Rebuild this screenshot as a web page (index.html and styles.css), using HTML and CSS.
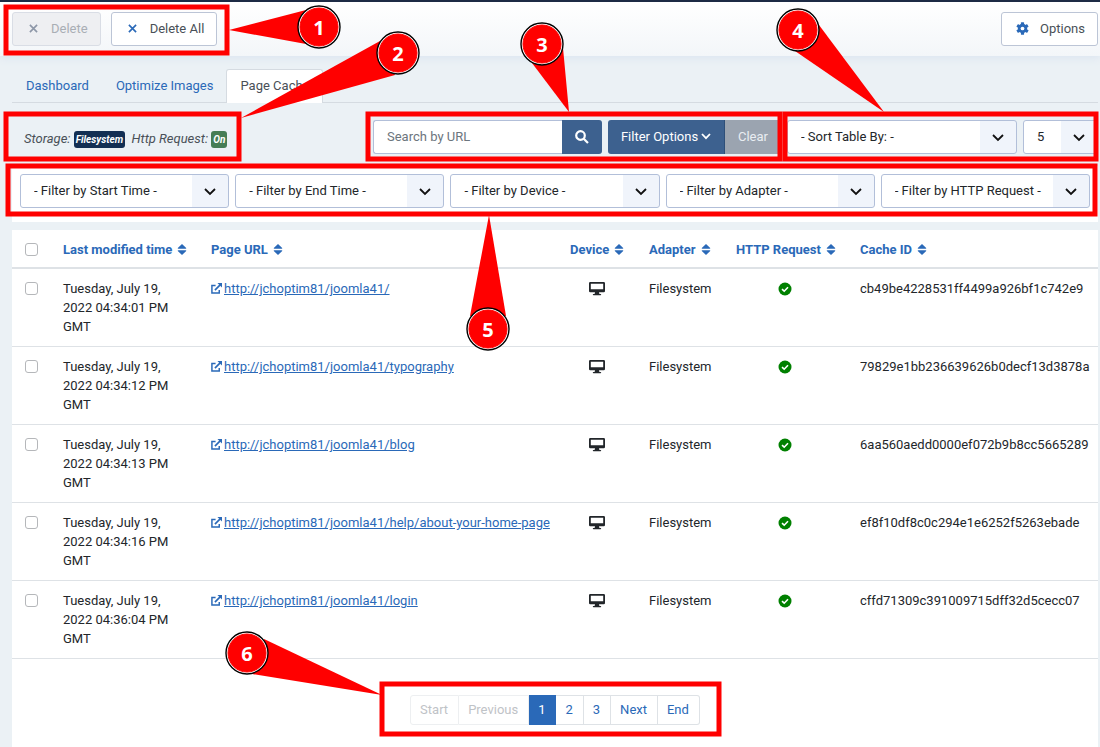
FILE: index.html
```html
<!DOCTYPE html>
<html lang="en">
<head>
  <meta charset="utf-8">
  <title>Page Cache</title>
  <link rel="stylesheet" href="styles.css">
</head>
<body>
  <svg class="icon-defs" aria-hidden="true">
    <symbol id="icon-sort" viewBox="0 0 10 12">
      <path d="M5 0 L9.6 4.3 Q10 5.2 9 5.2 H1 Q0 5.2 .4 4.3Z M5 12 L9.6 7.7 Q10 6.8 9 6.8 H1 Q0 6.8 .4 7.7Z"/>
    </symbol>
    <symbol id="icon-external" viewBox="0 0 12 12">
      <path d="M5 2.7H1V11H9V7.5" fill="none" stroke="currentColor" stroke-width="1.6"/>
      <path d="M4.3 7.8 L10 2" stroke="currentColor" stroke-width="1.8"/>
      <path d="M7 0H12V5Z"/>
    </symbol>
    <symbol id="icon-desktop" viewBox="0 0 16 14">
      <path fill-rule="evenodd" d="M1.3 0H14.7Q16 0 16 1.3V9Q16 10.3 14.7 10.3H10L10.4 12H11.5Q12.2 12 12.2 12.6T11.5 13.3H4.5Q3.8 13.3 3.8 12.6T4.5 12H5.6L6 10.3H1.3Q0 10.3 0 9V1.3Q0 0 1.3 0ZM1.8 1.7V7.3H14.2V1.7Z"/>
    </symbol>
    <symbol id="icon-check" viewBox="0 0 14 14">
      <circle cx="7" cy="7" r="6.5"/>
      <path d="M4 7.2 L6.2 9.2 L10 5.2" fill="none" stroke="#fff" stroke-width="1.6"/>
    </symbol>
    <symbol id="icon-times" viewBox="0 0 10 10">
      <path d="M1 1L9 9M9 1L1 9" fill="none" stroke="currentColor" stroke-width="1.8"/>
    </symbol>
  </svg>

  <header class="subhead">
    <button type="button" class="btn btn-delete" disabled><svg class="icon-x"><use href="#icon-times"/></svg>Delete</button>
    <button type="button" class="btn"><svg class="icon-x"><use href="#icon-times"/></svg>Delete All</button>
    <button type="button" class="btn btn-options">
      <svg class="icon-cog" viewBox="0 0 14 14"><rect x="5.3" y=".3" width="3.4" height="13.4" rx=".6"/><rect x="5.3" y=".3" width="3.4" height="13.4" rx=".6" transform="rotate(60 7 7)"/><rect x="5.3" y=".3" width="3.4" height="13.4" rx=".6" transform="rotate(120 7 7)"/><circle cx="7" cy="7" r="5"/><circle class="hole" cx="7" cy="7" r="2"/></svg>Options
    </button>
  </header>

  <main class="content">
    <nav class="tabs">
      <a href="#dashboard">Dashboard</a>
      <a href="#images">Optimize Images</a>
      <a href="#cache" class="active">Page Cache</a>
    </nav>

    <form class="cache-form">
      <div class="toolbar">
        <div class="status">Storage: <span class="badge badge-primary">Filesystem</span>&nbsp; Http Request: <span class="badge badge-success">On</span></div>
        <div class="search-group">
          <input type="text" class="search" placeholder="Search by URL" aria-label="Search by URL">
          <button type="button" class="btn-search" aria-label="Search">
            <svg viewBox="0 0 14 14"><circle cx="5.5" cy="5.5" r="4.3"/><path d="M8.7 8.7 L13 13"/></svg>
          </button>
        </div>
        <div class="filter-group">
          <button type="button" class="btn-filter">Filter Options<svg viewBox="0 0 10 7"><path d="M1 1 L5 5.2 L9 1"/></svg></button>
          <button type="button" class="btn-clear">Clear</button>
        </div>
        <select class="select sort" aria-label="Sort table by"><option>- Sort Table By: -</option></select>
        <select class="select limit" aria-label="Items per page"><option>5</option></select>
      </div>

      <div class="filters">
        <select class="select" aria-label="Start time"><option>- Filter by Start Time -</option></select>
        <select class="select" aria-label="End time"><option>- Filter by End Time -</option></select>
        <select class="select" aria-label="Device"><option>- Filter by Device -</option></select>
        <select class="select" aria-label="Adapter"><option>- Filter by Adapter -</option></select>
        <select class="select" aria-label="HTTP request"><option>- Filter by HTTP Request -</option></select>
      </div>

      <div class="panel">
        <table>
          <thead>
            <tr>
              <th class="col-check"><input type="checkbox" aria-label="Select all"></th>
              <th class="col-time"><a href="#">Last modified time<svg class="icon-sort"><use href="#icon-sort"/></svg></a></th>
              <th><a href="#">Page URL<svg class="icon-sort"><use href="#icon-sort"/></svg></a></th>
              <th class="col-device"><a href="#">Device<svg class="icon-sort"><use href="#icon-sort"/></svg></a></th>
              <th class="col-adapter"><a href="#">Adapter<svg class="icon-sort"><use href="#icon-sort"/></svg></a></th>
              <th class="col-http"><a href="#">HTTP Request<svg class="icon-sort"><use href="#icon-sort"/></svg></a></th>
              <th class="col-id"><a href="#">Cache ID<svg class="icon-sort"><use href="#icon-sort"/></svg></a></th>
            </tr>
          </thead>
          <tbody>
            <tr>
              <td><input type="checkbox" aria-label="Select row 1"></td>
              <td>Tuesday, July 19, 2022 04:34:01 PM GMT</td>
              <td class="url"><a href="#"><svg class="icon-ext"><use href="#icon-external"/></svg>http://jchoptim81/joomla41/</a></td>
              <td class="center"><svg class="icon-desktop"><use href="#icon-desktop"/></svg></td>
              <td>Filesystem</td>
              <td class="center"><svg class="icon-check"><use href="#icon-check"/></svg></td>
              <td>cb49be4228531ff4499a926bf1c742e9</td>
            </tr>
            <tr>
              <td><input type="checkbox" aria-label="Select row 2"></td>
              <td>Tuesday, July 19, 2022 04:34:12 PM GMT</td>
              <td class="url"><a href="#"><svg class="icon-ext"><use href="#icon-external"/></svg>http://jchoptim81/joomla41/typography</a></td>
              <td class="center"><svg class="icon-desktop"><use href="#icon-desktop"/></svg></td>
              <td>Filesystem</td>
              <td class="center"><svg class="icon-check"><use href="#icon-check"/></svg></td>
              <td>79829e1bb236639626b0decf13d3878a</td>
            </tr>
            <tr>
              <td><input type="checkbox" aria-label="Select row 3"></td>
              <td>Tuesday, July 19, 2022 04:34:13 PM GMT</td>
              <td class="url"><a href="#"><svg class="icon-ext"><use href="#icon-external"/></svg>http://jchoptim81/joomla41/blog</a></td>
              <td class="center"><svg class="icon-desktop"><use href="#icon-desktop"/></svg></td>
              <td>Filesystem</td>
              <td class="center"><svg class="icon-check"><use href="#icon-check"/></svg></td>
              <td>6aa560aedd0000ef072b9b8cc5665289</td>
            </tr>
            <tr>
              <td><input type="checkbox" aria-label="Select row 4"></td>
              <td>Tuesday, July 19, 2022 04:34:16 PM GMT</td>
              <td class="url"><a href="#"><svg class="icon-ext"><use href="#icon-external"/></svg>http://jchoptim81/joomla41/help/about-your-home-page</a></td>
              <td class="center"><svg class="icon-desktop"><use href="#icon-desktop"/></svg></td>
              <td>Filesystem</td>
              <td class="center"><svg class="icon-check"><use href="#icon-check"/></svg></td>
              <td>ef8f10df8c0c294e1e6252f5263ebade</td>
            </tr>
            <tr>
              <td><input type="checkbox" aria-label="Select row 5"></td>
              <td>Tuesday, July 19, 2022 04:36:04 PM GMT</td>
              <td class="url"><a href="#"><svg class="icon-ext"><use href="#icon-external"/></svg>http://jchoptim81/joomla41/login</a></td>
              <td class="center"><svg class="icon-desktop"><use href="#icon-desktop"/></svg></td>
              <td>Filesystem</td>
              <td class="center"><svg class="icon-check"><use href="#icon-check"/></svg></td>
              <td>cffd71309c391009715dff32d5cecc07</td>
            </tr>
          </tbody>
        </table>

        <nav class="pagination" aria-label="Pagination">
          <a class="off">Start</a>
          <a class="off">Previous</a>
          <a href="#" class="current">1</a>
          <a href="#">2</a>
          <a href="#">3</a>
          <a href="#">Next</a>
          <a href="#">End</a>
        </nav>
      </div>
    </form>
  </main>

  <!-- numbered callouts drawn over the page -->
  <svg class="callouts" width="1100" height="747" viewBox="0 0 1100 747">
    <g class="frames">
      <rect x="6" y="7" width="221" height="46"/>
      <rect x="6" y="114" width="233" height="45"/>
      <rect x="368" y="114" width="412" height="45"/>
      <rect x="785" y="114" width="311" height="45"/>
      <rect x="8" y="166" width="1087" height="48"/>
      <rect x="382" y="684" width="337" height="50"/>
    </g>
    <g class="pointers">
      <path d="M229 30 L306 10 L306 44Z"/>
      <path d="M241 118 L380 41 L395 75Z"/>
      <path d="M569 112 L532 63 L563 48Z"/>
      <path d="M884 112 L795 51 L819 25Z"/>
      <path d="M489 215 L470 316 L506 316Z"/>
      <path d="M382 695 L264 639 L252 674Z"/>
    </g>
    <g class="ring">
      <circle cx="319" cy="27" r="21"/>
      <circle cx="398" cy="53" r="21"/>
      <circle cx="542" cy="44" r="21"/>
      <circle cx="798" cy="30" r="21"/>
      <circle cx="488" cy="329" r="21"/>
      <circle cx="247" cy="653" r="21"/>
    </g>
    <g class="dot">
      <circle cx="319" cy="27" r="19"/>
      <circle cx="398" cy="53" r="19"/>
      <circle cx="542" cy="44" r="19"/>
      <circle cx="798" cy="30" r="19"/>
      <circle cx="488" cy="329" r="19"/>
      <circle cx="247" cy="653" r="19"/>
    </g>
    <g class="numbers">
      <text x="319" y="35">1</text>
      <text x="398" y="61">2</text>
      <text x="542" y="52">3</text>
      <text x="798" y="38">4</text>
      <text x="488" y="337">5</text>
      <text x="247" y="661">6</text>
    </g>
  </svg>
</body>
</html>
```
FILE: styles.css
```css
* {
  box-sizing: border-box;
}

html {
  min-height: 100%;
  background-color: #ebf1f5;
}

body {
  margin: 0;
  border-top: 2px solid #1d2b45;
  font-family: Roboto, sans-serif;
  font-size: 13px;
  line-height: 19px;
  color: #22262a;
}

button,
input,
select {
  font: inherit;
  margin: 0;
}

a {
  color: #2a69b8;
}

svg {
  fill: currentColor;
}

.icon-defs {
  position: absolute;
  width: 0;
  height: 0;
}

/* header */
.subhead {
  display: flex;
  gap: 10px;
  padding: 10px 2px 10px 12px;
  background: linear-gradient(#fff, #f3f6f9);
  box-shadow: 0 2px 8px #dbe4f0;
}

.btn {
  display: flex;
  align-items: center;
  height: 34px;
  padding: 0 12px 2px 16px;
  background-color: #fff;
  border: 1px solid #bcc5d6;
  border-radius: 3px;
  color: #495057;
}

.btn svg {
  color: #2a69b8;
}

.btn:disabled {
  background-color: #eeeff2;
  border-color: #d9dde5;
  color: #a9aeb5;
}

.btn:disabled svg {
  color: #8d97a8;
}

.icon-x {
  width: 9px;
  height: 9px;
  margin-right: 13px;
}

.btn-options {
  margin-left: auto;
  padding-left: 14px;
}

.icon-cog {
  width: 13px;
  height: 13px;
  margin-right: 11px;
}

.icon-cog .hole {
  fill: #fff;
}

.content {
  padding: 13px 2px 0 12px;
}

/* tabs */
.tabs {
  display: flex;
  border-bottom: 1px solid #d5dbe1;
}

.tabs a {
  height: 33px;
  padding: 6px 12px 6px 13px;
  border: 1px solid transparent;
  border-bottom: 0;
  border-radius: 3px 3px 0 0;
  text-decoration: none;
}

.tabs a.active {
  height: 34px;
  margin-bottom: -1px;
  background-color: #fff;
  border-color: #d5dbe1;
  color: #495057;
}

/* search toolbar */
.toolbar {
  display: flex;
  align-items: center;
  padding: 17px 0 12px;
}

.status {
  flex: 1;
  padding: 2px 0 0 12px;
  font-style: italic;
  color: #495057;
}

.badge {
  display: inline-block;
  height: 17px;
  padding: 0 2px;
  border-radius: 3px;
  font-size: 10px;
  font-weight: bold;
  line-height: 17px;
  color: #fff;
}

.badge-primary {
  background-color: #132f53;
}

.badge-success {
  background-color: #457d54;
}

.search-group,
.filter-group {
  display: flex;
  margin-right: 6px;
}

.search {
  width: 189px;
  height: 34px;
  padding: 0 13px 2px;
  background-color: #fff;
  border: 1px solid #b2bfd9;
  border-right: 0;
  border-radius: 3px 0 0 3px;
}

.search::placeholder {
  color: #6c757d;
}

.btn-search {
  width: 40px;
  height: 34px;
  padding: 4px 0 0;
  border: 0;
  border-radius: 0 3px 3px 0;
  background-color: #3d618f;
}

.btn-search svg {
  width: 14px;
  height: 14px;
  fill: none;
  stroke: #fff;
  stroke-width: 2.2;
}

.btn-filter {
  width: 117px;
  height: 34px;
  padding: 0 0 2px;
  border: 0;
  border-right: 1px solid #2e4f79;
  border-radius: 3px 0 0 3px;
  background-color: #3d618f;
  color: #fff;
}

.btn-filter svg {
  width: 10px;
  height: 7px;
  margin-left: 3px;
  vertical-align: 1px;
  fill: none;
  stroke: #fff;
  stroke-width: 1.8;
}

.btn-clear {
  width: 56px;
  height: 34px;
  padding: 0 0 2px;
  border: 0;
  background-color: #9ba4b0;
  color: #e9edf2;
}

.select {
  height: 34px;
  min-width: 0;
  padding: 0 36px 2px 13px;
  appearance: none;
  border: 1px solid #b2bfd9;
  border-radius: 3px;
  background-color: #fff;
  background-image: url("data:image/svg+xml,%3Csvg xmlns='http://www.w3.org/2000/svg' viewBox='0 0 12 8'%3E%3Cpath d='M1 1l5 5 5-5' fill='none' stroke='%23111' stroke-width='1.8'/%3E%3C/svg%3E"), linear-gradient(#f0f4fb, #f0f4fb);
  background-position: right 12px top 13px, right center;
  background-size: 12px 8px, 36px 100%;
  background-repeat: no-repeat;
  color: #22262a;
}

.sort {
  width: 230px;
  margin-right: 6px;
}

.limit {
  width: 75px;
}

/* filters */
.filters {
  display: grid;
  grid-template-columns: repeat(5, 1fr);
  gap: 6px;
  margin-bottom: 8px;
  padding: 8px 8px 14px;
  background-color: #fff;
}

/* table */
.panel {
  min-height: 520px;
  background-color: #fff;
}

table {
  width: 100%;
  table-layout: fixed;
  border-collapse: separate;
  border-spacing: 0;
}

th,
td {
  padding: 10px 13px;
  text-align: left;
  vertical-align: top;
  border-bottom: 1px solid #dee2e6;
}

th {
  padding-right: 0;
  padding-bottom: 8px;
  border-bottom-width: 2px;
  white-space: nowrap;
}

td:last-child {
  padding-right: 0;
}

.url {
  padding-right: 0;
  white-space: nowrap;
}

th a {
  text-decoration: none;
}

.col-check {
  width: 38px;
}

.col-time {
  width: 148px;
}

.col-device {
  width: 79px;
}

.col-adapter {
  width: 87px;
}

.col-http {
  width: 124px;
}

.col-id {
  width: 251px;
}

.center {
  text-align: center;
}

input[type="checkbox"] {
  display: block;
  appearance: none;
  width: 13px;
  height: 13px;
  margin-top: 3px;
  background-color: #fff;
  border: 1px solid #b5b7ba;
  border-radius: 3px;
}

.icon-sort {
  width: 10px;
  height: 11px;
  margin-left: 5px;
  vertical-align: -1px;
}

.icon-ext {
  width: 11px;
  height: 11px;
  margin-right: 2px;
  vertical-align: -1px;
}

.icon-desktop {
  width: 16px;
  height: 14px;
  vertical-align: -3px;
}

.icon-check {
  width: 14px;
  height: 14px;
  vertical-align: -3px;
  color: #008000;
}

/* pagination */
.pagination {
  display: flex;
  justify-content: center;
  padding: 36px 0 22px;
}

.pagination a {
  height: 30px;
  padding: 4px 10px 0 9px;
  border: 1px solid #dee2e6;
  border-left-width: 0;
  text-decoration: none;
}

.pagination a:first-child {
  border-left-width: 1px;
  border-radius: 3px 0 0 3px;
}

.pagination a:last-child {
  border-radius: 0 3px 3px 0;
}

.pagination .off {
  border-color: #edeff1;
  color: #bfc3c7;
}

.pagination .current {
  background-color: #2a69b8;
  border-color: #2a69b8;
  color: #fff;
}

/* callouts */
.callouts {
  position: absolute;
  top: 0;
  left: 0;
  pointer-events: none;
}

.frames {
  fill: none;
  stroke: #f00;
  stroke-width: 5;
}

.pointers {
  fill: #f00;
}

.ring {
  fill: #fff;
  stroke: #000;
  stroke-width: 1.4;
}

.dot {
  fill: #f00;
  stroke: #f00;
}

.numbers {
  fill: #fff;
  font-family: "Open Sans", sans-serif;
  font-size: 20px;
  font-weight: bold;
  text-anchor: middle;
}
```
